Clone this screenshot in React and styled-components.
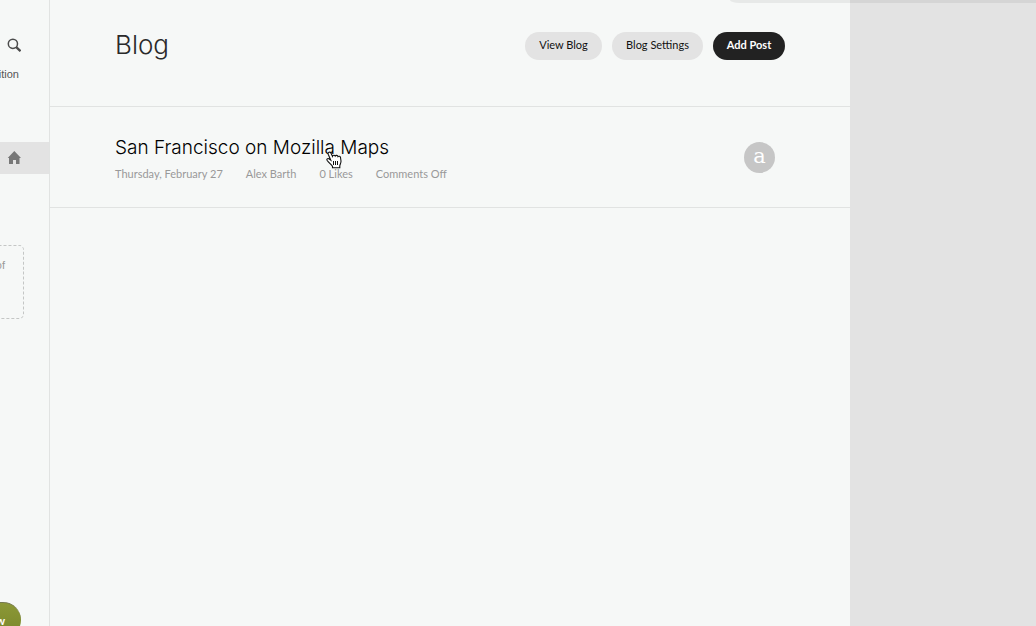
import React from "react";
import styled, { createGlobalStyle } from "styled-components";

const Global = createGlobalStyle`
  * { box-sizing: border-box; }
  body {
    margin: 0;
    background: #f6f8f7;
    color: #000;
    font-family: Lato, "Open Sans", sans-serif;
    font-size: 11px;
    line-height: 16px;
  }
  h1, h2, p, ul { margin: 0; padding: 0; font-weight: 400; }
  a { color: inherit; text-decoration: none; }
`;

const Page = styled.div`
  position: relative;
  display: grid;
  grid-template-columns: 50px minmax(0, 800px) minmax(0, 1fr);
  height: 100vh;
  overflow: hidden;
`;

const Sidebar = styled.aside`
  display: flex;
  flex-direction: column;
  overflow: hidden;
  border-right: 1px solid #e1e3e2;
`;

const SearchButton = styled.button`
  display: flex;
  align-self: flex-end;
  margin: 38px 28px 0 0;
  padding: 0;
  border: 0;
  background: none;
`;

const SiteLabel = styled.a`
  align-self: flex-end;
  margin: 14px 30px 0 0;
  color: #555;
  font-family: "Liberation Sans", sans-serif;
  white-space: nowrap;
`;

const HomeLink = styled.a`
  display: flex;
  flex: none;
  align-items: center;
  justify-content: flex-end;
  height: 32px;
  margin-top: 60px;
  padding-right: 28px;
  background: #e3e3e3;
`;

const Note = styled.p`
  display: flex;
  flex: none;
  align-self: flex-end;
  justify-content: flex-end;
  width: 120px;
  height: 74px;
  margin: 71px 25px 0 0;
  padding: 11px 18px;
  border: 1px dashed #c4c6c5;
  border-radius: 5px;
  color: #999;
  font-family: "Liberation Sans", sans-serif;
`;

const SidebarFooter = styled.div`
  display: flex;
  flex: none;
  justify-content: flex-end;
  height: 24px;
  margin-top: auto;
  padding-right: 28px;
`;

const GreenButton = styled.button`
  flex: none;
  width: 120px;
  height: 36px;
  padding: 0 16px;
  border: 0;
  border-top: 1px solid #75794f;
  border-radius: 18px;
  background: linear-gradient(#8c9837, #78862a);
  color: #fff;
  font: 700 11px/16px Lato, sans-serif;
  text-align: right;
`;

const Main = styled.main`
  min-width: 0;
`;

const Header = styled.header`
  display: flex;
  align-items: flex-start;
  justify-content: space-between;
  min-height: 107px;
  padding: 28px 65px 0;
  border-bottom: 1px solid #e1e3e2;
`;

const Title = styled.h1`
  color: #2a2a2a;
  font: 300 26px/34px Inter, sans-serif;
`;

const Actions = styled.div`
  display: flex;
  gap: 10px;
  padding-top: 4px;
`;

const PillButton = styled.button`
  height: 28px;
  min-width: ${(p) => p.$width};
  padding: 0 12px 2px;
  border: 0;
  border-radius: 14px;
  background: ${(p) => (p.$primary ? "#222" : "#e3e3e3")};
  color: ${(p) => (p.$primary ? "#fff" : "#111")};
  font: ${(p) => (p.$primary ? 700 : 400)} 11px/16px Lato, sans-serif;
  white-space: nowrap;
`;

const Post = styled.article`
  display: flex;
  align-items: center;
  justify-content: space-between;
  min-height: 101px;
  padding: 0 75px 0 65px;
  border-bottom: 1px solid #e1e3e2;
`;

const PostTitle = styled.h2`
  font: 300 19px/30px Inter, sans-serif;
`;

const TitleLink = styled.a`
  position: relative;
  display: inline-block;
`;

const Meta = styled.ul`
  display: flex;
  gap: 23px;
  margin-top: 3px;
  color: #999;
  list-style: none;
  white-space: nowrap;
`;

const Avatar = styled.div`
  display: flex;
  align-items: center;
  justify-content: center;
  width: 31px;
  height: 31px;
  border-radius: 50%;
  background: #c6c6c6;
  color: #fff;
  font: 21px/28px "DejaVu Serif", serif;
`;

const AvatarLetter = styled.span`
  padding-bottom: 2px;
`;

const Gutter = styled.div`
  background: #e3e3e3;
`;

const TopShade = styled.div`
  position: absolute;
  top: 0;
  left: 730px;
  right: 0;
  height: 3px;
  border-bottom-left-radius: 9px 3px;
  background: rgba(0, 0, 0, 0.06);
`;

const Pointer = styled.svg`
  position: absolute;
  top: 17px;
  left: 211px;
`;

const SearchIcon = () => (
  <svg width="14" height="14" viewBox="0 0 14 14" fill="none" stroke="#4c4c4c">
    <circle cx="5.9" cy="5.8" r="4.6" strokeWidth="1.5" />
    <path d="M9.2 9.1 13.5 13.2" strokeWidth="2.3" />
  </svg>
);

const HomeIcon = () => (
  <svg width="14" height="14" viewBox="0 0 14 14" fill="#777">
    <path d="M7.3 0 14 7H12.5V13H9V9H6V13H2V7H.7Z" />
  </svg>
);

const HandPointer = () => (
  <Pointer width="16" height="19" viewBox="0 0 16 19" aria-hidden="true">
    <path
      d="M4.8 10.2 2.2 4.2C1.5 2.4 4 1.3 4.9 3L6.5 6.4C6.9 5 8.7 5 9.2 6.1 9.8 5 11.6 5.2 12 6.6 12.8 5.8 14.2 6.3 14.5 7.5L15 11C15.1 12.9 14 14.3 13.8 15.8V17.7H6.5V16.4C5.2 14.6 2.8 12.7 1.2 10.5.3 9.1 1.6 8 2.9 8.8Z"
      fill="#fff"
      stroke="#111"
      strokeWidth="1.1"
    />
    <path d="M7.5 11v4M9.5 11v4M11.5 11v4" stroke="#111" />
  </Pointer>
);

export default function App() {
  return (
    <>
      <Global />
      <Page>
        <Sidebar>
          <SearchButton aria-label="Search"><SearchIcon /></SearchButton>
          <SiteLabel href="#">ition</SiteLabel>
          <HomeLink href="#" aria-label="Home"><HomeIcon /></HomeLink>
          <Note>of</Note>
          <SidebarFooter><GreenButton>w</GreenButton></SidebarFooter>
        </Sidebar>
        <Main>
          <Header>
            <Title>Blog</Title>
            <Actions>
              <PillButton $width="77px">View Blog</PillButton>
              <PillButton $width="91px">Blog Settings</PillButton>
              <PillButton $width="72px" $primary>Add Post</PillButton>
            </Actions>
          </Header>
          <Post>
            <div>
              <PostTitle>
                <TitleLink href="#">
                  San Francisco on Mozilla Maps
                  <HandPointer />
                </TitleLink>
              </PostTitle>
              <Meta>
                <li>Thursday, February 27</li>
                <li>Alex Barth</li>
                <li>0 Likes</li>
                <li>Comments Off</li>
              </Meta>
            </div>
            <Avatar><AvatarLetter>a</AvatarLetter></Avatar>
          </Post>
        </Main>
        <Gutter />
        <TopShade />
      </Page>
    </>
  );
}
